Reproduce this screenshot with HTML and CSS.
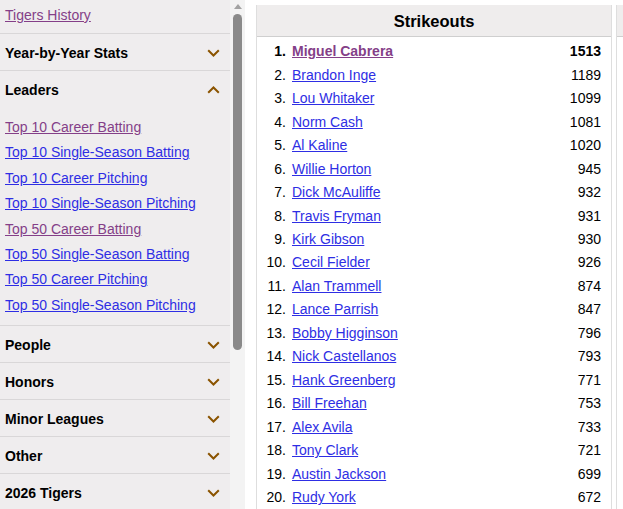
FILE: index.html
```html
<!DOCTYPE html>
<html lang="en">
<head>
<meta charset="utf-8">
<title>Tigers Leaders - Strikeouts</title>
<link rel="stylesheet" href="styles.css">
</head>
<body>
<div class="page">
  <nav class="sidebar">
    <div class="nav-top"><a class="lnk visited" href="#">Tigers History</a></div>
    <div class="sec-head"><span>Year-by-Year Stats</span><svg class="chev" width="13" height="8" viewBox="0 0 13 8"><polyline points="1.2,1.2 6.5,6.5 11.8,1.2"/></svg></div>
    <div class="sec-head open"><span>Leaders</span><svg class="chev" width="13" height="8" viewBox="0 0 13 8"><polyline points="1.2,6.8 6.5,1.5 11.8,6.8"/></svg></div>
    <div class="sec-links">
      <a class="lnk visited" href="#">Top 10 Career Batting</a>
      <a class="lnk" href="#">Top 10 Single-Season Batting</a>
      <a class="lnk" href="#">Top 10 Career Pitching</a>
      <a class="lnk" href="#">Top 10 Single-Season Pitching</a>
      <a class="lnk visited" href="#">Top 50 Career Batting</a>
      <a class="lnk" href="#">Top 50 Single-Season Batting</a>
      <a class="lnk" href="#">Top 50 Career Pitching</a>
      <a class="lnk" href="#">Top 50 Single-Season Pitching</a>
    </div>
    <div class="sec-head"><span>People</span><svg class="chev" width="13" height="8" viewBox="0 0 13 8"><polyline points="1.2,1.2 6.5,6.5 11.8,1.2"/></svg></div>
    <div class="sec-head"><span>Honors</span><svg class="chev" width="13" height="8" viewBox="0 0 13 8"><polyline points="1.2,1.2 6.5,6.5 11.8,1.2"/></svg></div>
    <div class="sec-head"><span>Minor Leagues</span><svg class="chev" width="13" height="8" viewBox="0 0 13 8"><polyline points="1.2,1.2 6.5,6.5 11.8,1.2"/></svg></div>
    <div class="sec-head"><span>Other</span><svg class="chev" width="13" height="8" viewBox="0 0 13 8"><polyline points="1.2,1.2 6.5,6.5 11.8,1.2"/></svg></div>
    <div class="sec-head"><span>2026 Tigers</span><svg class="chev" width="13" height="8" viewBox="0 0 13 8"><polyline points="1.2,1.2 6.5,6.5 11.8,1.2"/></svg></div>
  </nav>
  <div class="scrollbar">
    <div class="sb-arrow"></div>
    <div class="sb-thumb"></div>
  </div>
  <main class="main">
    <section class="leader-box">
      <h2 class="box-title">Strikeouts</h2>
      <ol class="leader-list">
        <li class="row top"><span class="rank">1.</span><a class="lnk visited" href="#">Miguel Cabrera</a><span class="val">1513</span></li>
        <li class="row"><span class="rank">2.</span><a class="lnk" href="#">Brandon Inge</a><span class="val">1189</span></li>
        <li class="row"><span class="rank">3.</span><a class="lnk" href="#">Lou Whitaker</a><span class="val">1099</span></li>
        <li class="row"><span class="rank">4.</span><a class="lnk" href="#">Norm Cash</a><span class="val">1081</span></li>
        <li class="row"><span class="rank">5.</span><a class="lnk" href="#">Al Kaline</a><span class="val">1020</span></li>
        <li class="row"><span class="rank">6.</span><a class="lnk" href="#">Willie Horton</a><span class="val">945</span></li>
        <li class="row"><span class="rank">7.</span><a class="lnk" href="#">Dick McAuliffe</a><span class="val">932</span></li>
        <li class="row"><span class="rank">8.</span><a class="lnk" href="#">Travis Fryman</a><span class="val">931</span></li>
        <li class="row"><span class="rank">9.</span><a class="lnk" href="#">Kirk Gibson</a><span class="val">930</span></li>
        <li class="row"><span class="rank">10.</span><a class="lnk" href="#">Cecil Fielder</a><span class="val">926</span></li>
        <li class="row"><span class="rank">11.</span><a class="lnk" href="#">Alan Trammell</a><span class="val">874</span></li>
        <li class="row"><span class="rank">12.</span><a class="lnk" href="#">Lance Parrish</a><span class="val">847</span></li>
        <li class="row"><span class="rank">13.</span><a class="lnk" href="#">Bobby Higginson</a><span class="val">796</span></li>
        <li class="row"><span class="rank">14.</span><a class="lnk" href="#">Nick Castellanos</a><span class="val">793</span></li>
        <li class="row"><span class="rank">15.</span><a class="lnk" href="#">Hank Greenberg</a><span class="val">771</span></li>
        <li class="row"><span class="rank">16.</span><a class="lnk" href="#">Bill Freehan</a><span class="val">753</span></li>
        <li class="row"><span class="rank">17.</span><a class="lnk" href="#">Alex Avila</a><span class="val">733</span></li>
        <li class="row"><span class="rank">18.</span><a class="lnk" href="#">Tony Clark</a><span class="val">721</span></li>
        <li class="row"><span class="rank">19.</span><a class="lnk" href="#">Austin Jackson</a><span class="val">699</span></li>
        <li class="row"><span class="rank">20.</span><a class="lnk" href="#">Rudy York</a><span class="val">672</span></li>
      </ol>
    </section>
    <section class="leader-box next">
      <h2 class="box-title">&nbsp;</h2>
    </section>
  </main>
</div>
</body>
</html>
```

FILE: styles.css
```css
html, body {
  margin: 0;
  padding: 0;
  height: 509px;
  overflow: hidden;
  background: #ffffff;
  font-family: "Liberation Sans", Arial, sans-serif;
  font-size: 14px;
  color: #000;
}

.page {
  display: flex;
  height: 509px;
}

.sidebar {
  width: 230px;
  flex-shrink: 0;
  background: #efedee;
  overflow: hidden;
  display: flex;
  flex-direction: column;
}

.lnk {
  color: #2e2ee4;
  text-decoration: underline;
}

.lnk.visited {
  color: #843f88;
}

.nav-top {
  margin-top: -3px;
  height: 36px;
  display: flex;
  align-items: center;
  padding-left: 5px;
  border-bottom: 1px solid #d9d7d8;
  flex-shrink: 0;
}

.sec-head {
  height: 36px;
  flex-shrink: 0;
  display: flex;
  align-items: center;
  justify-content: space-between;
  padding: 1px 10px 0 5px;
  box-sizing: border-box;
  height: 37px;
  font-weight: bold;
  border-bottom: 1px solid #d9d7d8;
}

.sec-head.open {
  border-bottom: none;
  height: 36px;
}

.chev {
  display: block;
  fill: none;
  stroke: #8b5400;
  stroke-width: 2;
}

.sec-links {
  flex-shrink: 0;
  display: flex;
  flex-direction: column;
  padding: 8px 0 6.8px 5px;
  border-bottom: 1px solid #d9d7d8;
}

.sec-links .lnk {
  line-height: 25.4px;
  align-self: flex-start;
}

.scrollbar {
  width: 15px;
  flex-shrink: 0;
  background: #f3f3f3;
  display: flex;
  flex-direction: column;
  align-items: center;
}

.sb-arrow {
  margin-top: 4px;
  width: 0;
  height: 0;
  border-left: 4px solid transparent;
  border-right: 4px solid transparent;
  border-bottom: 5px solid #a3a3a3;
}

.sb-thumb {
  margin-top: 5px;
  width: 9px;
  height: 336px;
  background: #8a8a8a;
  border-radius: 5px;
}

.main {
  flex: 1;
  display: flex;
  gap: 4px;
  padding: 5px 0 0 11px;
  overflow: hidden;
}

.leader-box {
  width: 354px;
  flex-shrink: 0;
  border-left: 1px solid #dedede;
  border-right: 1px solid #dedede;
}

.leader-box.next {
  width: auto;
  flex: 1;
  border-right: none;
}

.box-title {
  margin: 0;
  height: 31px;
  line-height: 33px;
  background: #efeded;
  border-bottom: 1px solid #cfcfcf;
  text-align: center;
  font-size: 16.5px;
  font-weight: bold;
}

.leader-list {
  list-style: none;
  margin: 0;
  padding: 2.5px 10px 0 0;
}

.row {
  display: grid;
  grid-template-columns: 29px 1fr auto;
  column-gap: 6px;
  height: 23.47px;
  align-items: center;
}

.rank {
  text-align: right;
}

.row .lnk {
  justify-self: start;
}

.val {
  text-align: right;
}

.row.top {
  font-weight: bold;
}
```
